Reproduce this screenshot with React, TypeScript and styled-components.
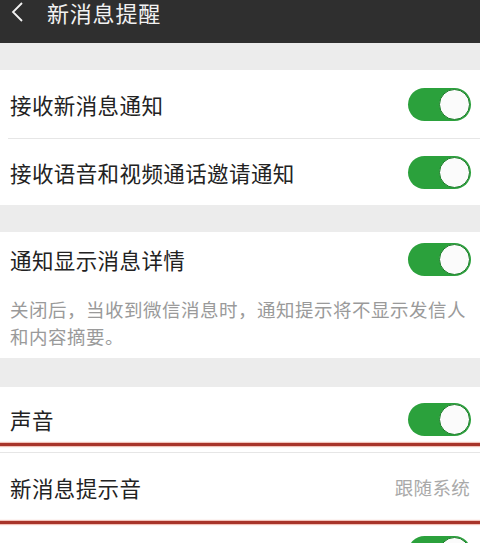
import React from "react";
import styled, { createGlobalStyle } from "styled-components";

const Global = createGlobalStyle`
  html, body { margin: 0; padding: 0; background: #ececec; overflow: hidden; }
  body { font-family: "Noto Sans CJK SC", "Noto Sans", sans-serif; }
`;

const Page = styled.div`
  width: 480px;
  height: 543px;
  overflow: hidden;
  background: #ececec;
  display: flex;
  flex-direction: column;
`;

const Header = styled.div`
  height: 43px;
  flex-shrink: 0;
  background: #2f2f2f;
  display: flex;
  align-items: flex-start;
  gap: 23px;
  padding-left: 10px;
  color: #f2f2f2;
`;

const Title = styled.div`
  font-size: 22px;
  line-height: 26px;
  margin-top: -1px;
  letter-spacing: 0.8px;
`;

const Gap = styled.div<{ $h: number }>`
  height: ${(p) => p.$h}px;
  flex-shrink: 0;
`;

const Section = styled.div`
  background: #fff;
  display: flex;
  flex-direction: column;
  flex-shrink: 0;
`;

const Row = styled.div<{ $h: number; $pt?: number }>`
  height: ${(p) => p.$h}px;
  padding-top: ${(p) => p.$pt ?? 0}px;
  box-sizing: border-box;
  display: flex;
  align-items: center;
  justify-content: space-between;
  padding-left: 10px;
  padding-right: 9px;
  flex-shrink: 0;
`;

const Label = styled.span`
  font-size: 21.5px;
  color: #222;
  letter-spacing: 0.4px;
`;

const Value = styled.span`
  font-size: 18.5px;
  color: #a9a9a9;
  letter-spacing: 0.3px;
  margin-right: 1px;
`;

const Divider = styled.div<{ $inset?: number }>`
  height: 1px;
  background: #e6e6e6;
  margin-left: ${(p) => p.$inset ?? 0}px;
`;

const RedLine = styled.div`
  height: 3px;
  background: #a8342a;
  box-shadow: 0 0 1px 1px rgba(225, 120, 100, 0.45);
  position: relative;
  z-index: 1;
`;

const Desc = styled.div`
  padding: 10px 10px 8px 10px;
  font-size: 18.5px;
  line-height: 27px;
  color: #9a9a9a;
  letter-spacing: 0.5px;
  white-space: nowrap;
`;

const Track = styled.div`
  width: 63px;
  height: 33px;
  border-radius: 17px;
  background: #2ba13c;
  position: relative;
  flex-shrink: 0;
`;

const Knob = styled.div`
  position: absolute;
  right: 1px;
  top: 1px;
  width: 29px;
  height: 29px;
  border-radius: 50%;
  background: #fbfbfb;
  border: 1px solid #1f7d2c;
`;

const Toggle = () => (
  <Track>
    <Knob />
  </Track>
);

const Back = () => (
  <svg width="14" height="22" viewBox="0 0 14 22" style={{ marginTop: 1 }}>
    <path d="M12 2 L3 11 L12 20" fill="none" stroke="#f2f2f2" strokeWidth="1.8" />
  </svg>
);

export default function App() {
  return (
    <Page>
      <Global />
      <Header>
        <Back />
        <Title>新消息提醒</Title>
      </Header>
      <Gap $h={27} />
      <Section>
        <Row $h={68}>
          <Label>接收新消息通知</Label>
          <Toggle />
        </Row>
        <Divider $inset={8} />
        <Row $h={66}>
          <Label>接收语音和视频通话邀请通知</Label>
          <Toggle />
        </Row>
      </Section>
      <Gap $h={27} />
      <Section>
        <Row $h={54}>
          <Label>通知显示消息详情</Label>
          <Toggle />
        </Row>
        <Desc>
          关闭后，当收到微信消息时，通知提示将不显示发信人
          <br />
          和内容摘要。
        </Desc>
      </Section>
      <Gap $h={29} />
      <Section>
        <Row $h={56} $pt={8}>
          <Label>声音</Label>
          <Toggle />
        </Row>
        <RedLine />
        <Gap $h={6} />
        <Divider />
        <Row $h={68}>
          <Label>新消息提示音</Label>
          <Value>跟随系统</Value>
        </Row>
        <RedLine />
        <Row $h={56}>
          <Label>振动</Label>
          <Toggle />
        </Row>
      </Section>
    </Page>
  );
}
